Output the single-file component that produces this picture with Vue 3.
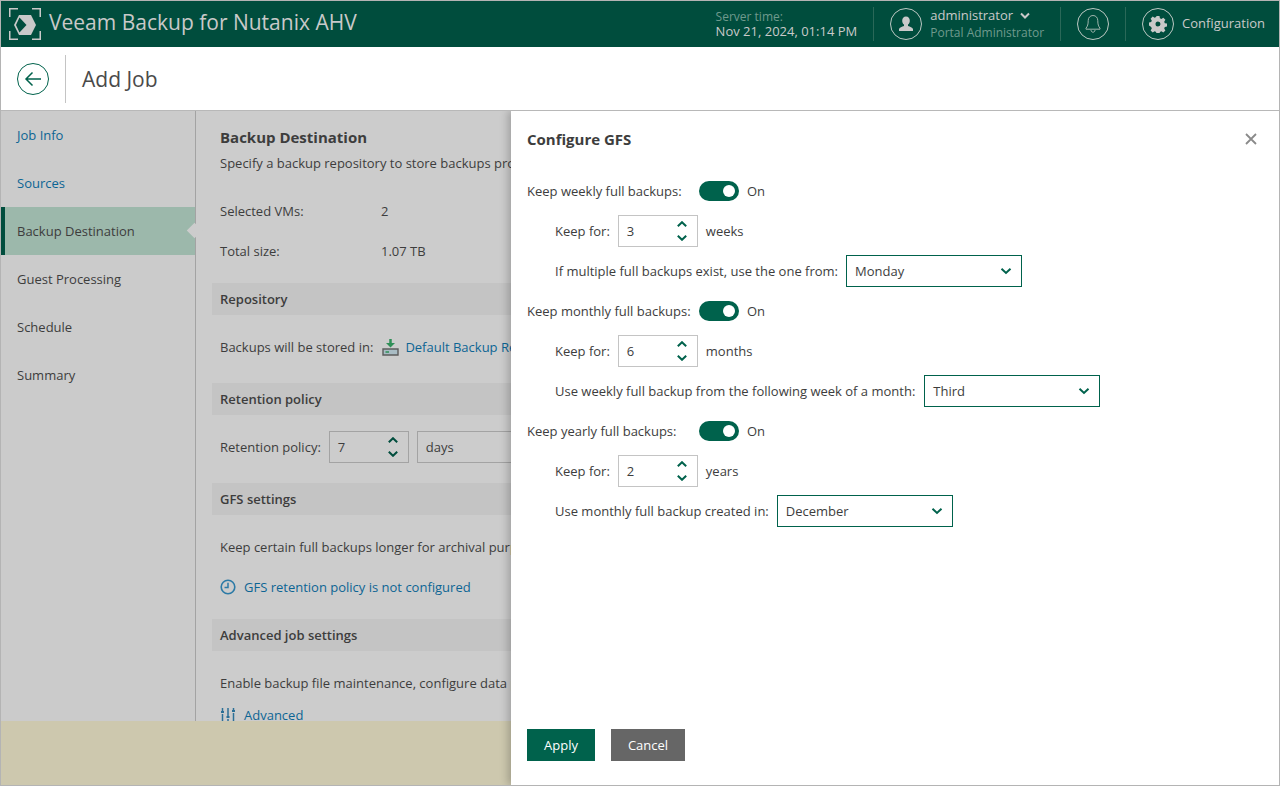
<script setup>
const nav = [
  { label: 'Job Info', kind: 'link' },
  { label: 'Sources', kind: 'link' },
  { label: 'Backup Destination', kind: 'active' },
  { label: 'Guest Processing', kind: '' },
  { label: 'Schedule', kind: '' },
  { label: 'Summary', kind: '' }
]
const groups = [
  { label: 'Keep weekly full backups:', keep: '3', unit: 'weeks', pick: 'If multiple full backups exist, use the one from:', value: 'Monday', nudge: false },
  { label: 'Keep monthly full backups:', keep: '6', unit: 'months', pick: 'Use weekly full backup from the following week of a month:', value: 'Third', nudge: true },
  { label: 'Keep yearly full backups:', keep: '2', unit: 'years', pick: 'Use monthly full backup created in:', value: 'December', nudge: false }
]
</script>

<template>
  <div class="app">
    <header class="topbar">
      <svg class="logo" width="32" height="32" viewBox="0 0 32 32" fill="none">
        <path d="M.75 9V.75H9M23 .75h8.250V9M31.250 23v8.250H23M9 31.250H.75V23" stroke="#c9c9c9" stroke-width="1.500"/>
        <path d="M10 7h12l5 10-5 10H10L5 17z" fill="#c9c9c9"/>
        <path d="M7 17 10.500 9.500 17.500 17l-7 7.500z" fill="#004d3d"/>
      </svg>
      <div class="product">Veeam Backup for Nutanix AHV</div>
      <div class="topright">
        <div class="time">
          <div class="dim">Server time:</div>
          <div>Nov 21, 2024, 01:14 PM</div>
        </div>
        <i class="vline"></i>
        <span class="circle">
          <svg width="18" height="18" viewBox="0 0 18 18"><path d="M9 1.500c2.400 0 3.800 1.800 3.800 4.200 0 1.700-.7 3.100-1.800 3.900v1.300c2 .7 4.500 1.500 5 3.100v2H2v-2c.5-1.600 3-2.400 5-3.100V9.600C5.900 8.800 5.200 7.400 5.200 5.700 5.200 3.300 6.600 1.500 9 1.500z" fill="#c9c9c9"/></svg>
        </span>
        <div class="user">
          <div class="uname">administrator
            <svg width="10" height="8" viewBox="0 0 10 8" fill="none"><path d="M1 1.500 5 5.500l4-4" stroke="#c9c9c9" stroke-width="2"/></svg>
          </div>
          <div class="dim small">Portal Administrator</div>
        </div>
        <i class="vline"></i>
        <span class="circle">
          <svg width="18" height="20" viewBox="0 0 18 20" fill="none"><path d="M9 1.500c-3 0-4.800 2.300-4.800 5.200 0 3.600-.6 5.500-2.200 7.500v1h14v-1c-1.600-2-2.200-3.900-2.200-7.500 0-2.900-1.800-5.200-4.800-5.200zM7 16c0 1.300.8 2.200 2 2.200s2-.9 2-2.200" stroke="#9fb5ad" stroke-width="1"/></svg>
        </span>
        <i class="vline"></i>
        <span class="circle">
          <svg width="18" height="18" viewBox="0 0 18 18"><path fill="#c9c9c9" fill-rule="evenodd" d="M7.500 1h3l.4 2.200 1.500.7 1.900-1.200 2.100 2.100-1.200 1.900.6 1.500 2.200.4v3l-2.200.4-.6 1.500 1.200 1.900-2.100 2.100-1.900-1.200-1.500.6-.4 2.200h-3l-.4-2.200-1.500-.6-1.900 1.200-2.100-2.100 1.200-1.900-.6-1.500L0 10.500v-3l2.200-.4.6-1.500L1.600 3.700l2.100-2.100 1.900 1.200 1.500-.7zM9 6.500a2.500 2.500 0 1 0 0 5 2.500 2.500 0 0 0 0-5z"/></svg>
        </span>
        <div class="config">Configuration</div>
      </div>
    </header>

    <div class="subbar">
      <span class="back">
        <svg width="32" height="32" viewBox="0 0 32 32" fill="none"><circle cx="16" cy="16" r="15.500" stroke="#00624c"/><path d="M24 16H9M15.500 9.500 9 16l6.500 6.500" stroke="#00624c" stroke-width="1.500"/></svg>
      </span>
      <h1>Add Job</h1>
    </div>

    <div class="main">
      <nav class="side">
        <div v-for="n in nav" :key="n.label" class="navitem" :class="n.kind">{{ n.label }}</div>
      </nav>
      <section class="content">
        <h2>Backup Destination</h2>
        <p class="intro">Specify a backup repository to store backups produced by this job.</p>
        <div class="kv first"><span>Selected VMs:</span><span>2</span></div>
        <div class="kv"><span>Total size:</span><span>1.07 TB</span></div>

        <div class="band">Repository</div>
        <div class="line">
          Backups will be stored in:
          <svg class="repo" width="17" height="17" viewBox="0 0 17 17" fill="none">
            <path d="M8.500 0v5" stroke="#2f8f57" stroke-width="2.500"/><path d="M4 4h9l-4.500 4.500z" fill="#2f8f57"/>
            <path d="M1 10h15v6H1z" fill="#a9bcc4" stroke="#5c5c5c" stroke-width="1.400"/><path d="M3.500 13h3.500" stroke="#2f8f57" stroke-width="1.500"/>
          </svg>
          <a>Default Backup Repository</a>
        </div>

        <div class="band ret">Retention policy</div>
        <div class="line retention">
          Retention policy:
          <div class="spin grey"><span>7</span>
            <span class="arrows">
              <svg width="10" height="6" viewBox="0 0 10 6" fill="none"><path d="M.8 5.200 5 1.200 9.200 5.200" stroke="#004d3d" stroke-width="2"/></svg>
              <svg width="10" height="6" viewBox="0 0 10 6" fill="none"><path d="M.8 .8 5 4.800 9.200 .8" stroke="#004d3d" stroke-width="2"/></svg>
            </span>
          </div>
          <div class="days">days</div>
        </div>

        <div class="band gfs">GFS settings</div>
        <div class="line">Keep certain full backups longer for archival purposes.</div>
        <div class="line iconlink">
          <svg width="16" height="16" viewBox="0 0 16 16" fill="none"><circle cx="8" cy="8" r="6.800" stroke="#2c7aa6" stroke-width="1.600"/><path d="M8 3.800V8.500H4.500" stroke="#2c7aa6" stroke-width="1.500"/></svg>
          <a>GFS retention policy is not configured</a>
        </div>

        <div class="band adv">Advanced job settings</div>
        <div class="line">Enable backup file maintenance, configure data processing options and more.</div>
        <div class="line iconlink last">
          <svg width="16" height="16" viewBox="0 0 16 16" fill="none"><path d="M2.500 1v3M2.500 7v8M8 1v8M8 12v3M13.500 1v2M13.500 6v9" stroke="#2c6f96" stroke-width="1.500"/><path d="M1 5h3M6.500 10h3M12 4h3" stroke="#2c6f96" stroke-width="2"/></svg>
          <a>Advanced</a>
        </div>
      </section>
    </div>
    <div class="footer"></div>

    <aside class="panel">
      <div class="panelhead">
        <h3>Configure GFS</h3>
        <svg class="close" width="12" height="12" viewBox="0 0 12 12" fill="none"><path d="M1 1l10 10M11 1 1 11" stroke="#8a8a8a" stroke-width="1.800"/></svg>
      </div>
      <div class="form">
        <template v-for="g in groups" :key="g.label">
          <div class="row">
            <span class="tlabel">{{ g.label }}</span>
            <span class="toggle"><i></i></span>
            <span>On</span>
          </div>
          <div class="row sub">
            <span>Keep for:</span>
            <div class="spin"><span>{{ g.keep }}</span>
              <span class="arrows">
                <svg width="10" height="6" viewBox="0 0 10 6" fill="none"><path d="M.8 5.200 5 1.200 9.200 5.200" stroke="#00624c" stroke-width="2"/></svg>
                <svg width="10" height="6" viewBox="0 0 10 6" fill="none"><path d="M.8 .8 5 4.800 9.200 .8" stroke="#00624c" stroke-width="2"/></svg>
              </span>
            </div>
            <span>{{ g.unit }}</span>
          </div>
          <div class="row sub">
            <span>{{ g.pick }}</span>
            <div class="select" :class="{ nudge: g.nudge }"><span>{{ g.value }}</span>
              <svg width="12" height="8" viewBox="0 0 12 8" fill="none"><path d="M1.500 1.800 6 6 10.500 1.800" stroke="#00624c" stroke-width="2"/></svg>
            </div>
          </div>
        </template>
      </div>
      <div class="buttons">
        <button class="apply">Apply</button>
        <button class="cancel">Cancel</button>
      </div>
    </aside>
  </div>
</template>

<style>
html, body { margin: 0; padding: 0; background: #fff; }
</style>

<style scoped>
* { box-sizing: border-box; }
.app {
  position: relative;
  width: 1280px;
  height: 786px;
  border: 1px solid #b4b4b4;
  overflow: hidden;
  display: flex;
  flex-direction: column;
  font-family: "Open Sans", "Noto Sans", sans-serif;
  font-size: 13px;
  color: #3d3d3d;
  background: #ccc;
}
.topbar {
  height: 46px;
  flex: none;
  background: #004d3d;
  display: flex;
  align-items: center;
  color: #c9c9c9;
  padding-left: 8px;
}
.logo { margin-right: 8px; flex: none; }
.product { font-size: 21px; line-height: 30px; margin-bottom: 4px; }
.topright {
  margin-left: auto;
  display: flex;
  align-items: center;
  padding-right: 14px;
}
.time { line-height: 15px; margin-right: 16px; white-space: nowrap; }
.dim { color: #6f9a8d; }
.time .dim { font-size: 12px; }
.dim.small { font-size: 12px; }
.vline { width: 1px; height: 34px; background: #2a6858; display: block; flex: none; }
.circle {
  width: 32px;
  height: 32px;
  border: 1px solid #bcc8c3;
  border-radius: 50%;
  display: flex;
  align-items: center;
  justify-content: center;
  flex: none;
  margin: 0 16px;
}
.user { line-height: 17px; margin-left: -8px; margin-right: 16px; white-space: nowrap; }
.uname svg { margin-left: 4px; }
.config { margin-left: -8px; margin-bottom: 2px; }
.subbar {
  height: 64px;
  flex: none;
  background: #fff;
  border-bottom: 1px solid #b8b8b8;
  display: flex;
  align-items: center;
  padding-left: 16px;
}
.back { display: flex; padding-right: 16px; height: 48px; align-items: center; border-right: 1px solid #c4c4c4; }
h1 { margin: 0 0 0 16px; font-size: 21px; font-weight: 400; color: #4a4a4a; }
.main { flex: 1; min-height: 0; display: flex; overflow: hidden; }
.side { width: 195px; flex: none; border-right: 1px solid #a3a3a3; background: #cbcbcb; }
.navitem { height: 48px; padding-left: 16px; display: flex; align-items: center; position: relative; color: #3d3d3d; }
.navitem.link { color: #0c6594; }
.navitem.active { background: #9cb8ab; border-left: 4px solid #004d3d; padding-left: 12px; }
.navitem.active::after {
  content: "";
  position: absolute;
  right: -5px;
  top: 18px;
  width: 11px;
  height: 11px;
  background: #ccc;
  transform: rotate(45deg);
}
.content { flex: 1; padding: 0 0 0 16px; min-width: 0; white-space: nowrap; }
h2 { margin: 15px 0 0 8px; font-size: 15px; line-height: 22px; font-weight: 700; color: #3d3d3d; }
.intro { margin: 6px 0 0 8px; line-height: 18px; }
.kv { display: flex; margin: 22px 0 0 8px; line-height: 18px; }
.kv.first { margin-top: 30px; }
.kv span:first-child { width: 161px; }
.band { height: 32px; margin-top: 23px; background: #c4c4c4; padding-left: 8px; font-weight: 600; line-height: 32px; }
.band.ret { margin-top: 27px; }
.line { margin: 23px 0 0 8px; line-height: 18px; display: flex; align-items: center; }
.repo { margin: 0 6px 0 9px; }
.line a, .iconlink a { color: #0c6594; }
.retention { margin-top: 16px; height: 32px; }
.band.gfs { margin-top: 20px; }
.band.adv { margin-top: 23px; }
.iconlink { margin-top: 22px; }
.iconlink.last { margin-top: 14px; }
.iconlink svg { margin-right: 8px; }
.spin {
  width: 80px;
  height: 32px;
  border: 1px solid #c4c4c4;
  background: #fff;
  padding: 0 8px;
  display: flex;
  align-items: center;
  justify-content: space-between;
  flex: none;
}
.spin.grey { background: #ccc; border-color: #a3a3a3; margin-left: 8px; }
.days { width: 120px; height: 32px; border: 1px solid #a3a3a3; margin-left: 8px; line-height: 30px; padding-left: 8px; }
.arrows { display: flex; flex-direction: column; gap: 8px; margin-right: 2px; }
.arrows svg { display: block; }
.footer { height: 64px; flex: none; background: #cdc8ae; }
.panel {
  position: absolute;
  left: 510px;
  top: 110px;
  right: 0;
  bottom: 0;
  background: #fff;
  box-shadow: -3px 0 8px rgba(0, 0, 0, .22);
  clip-path: inset(0 0 0 -20px);
  display: flex;
  flex-direction: column;
  white-space: nowrap;
}
.panelhead { height: 56px; display: flex; align-items: center; justify-content: space-between; padding: 0 22px 0 16px; }
h3 { margin: 0; font-size: 15px; font-weight: 700; color: #3d3d3d; }
.form { padding: 4px 16px 0; flex: 1; }
.row { height: 40px; display: flex; align-items: center; gap: 8px; }
.row.sub { padding-left: 28px; }
.tlabel { width: 164px; }
.toggle { width: 40px; height: 20px; border-radius: 10px; background: #00624c; position: relative; display: block; flex: none; }
.toggle i { position: absolute; width: 12px; height: 12px; border-radius: 50%; background: #fff; top: 4px; right: 4px; }
.select {
  width: 176px;
  height: 32px;
  border: 1px solid #00624c;
  padding: 0 9px 0 8px;
  display: flex;
  align-items: center;
  justify-content: space-between;
  flex: none;
}
.select.nudge { margin-left: 1px; }
.buttons { display: flex; gap: 16px; padding: 0 0 24px 16px; }
button { height: 32px; border: 0; font: inherit; color: #fff; padding: 0; }
.apply { width: 68px; background: #00624c; }
.cancel { width: 74px; background: #666; }
</style>
